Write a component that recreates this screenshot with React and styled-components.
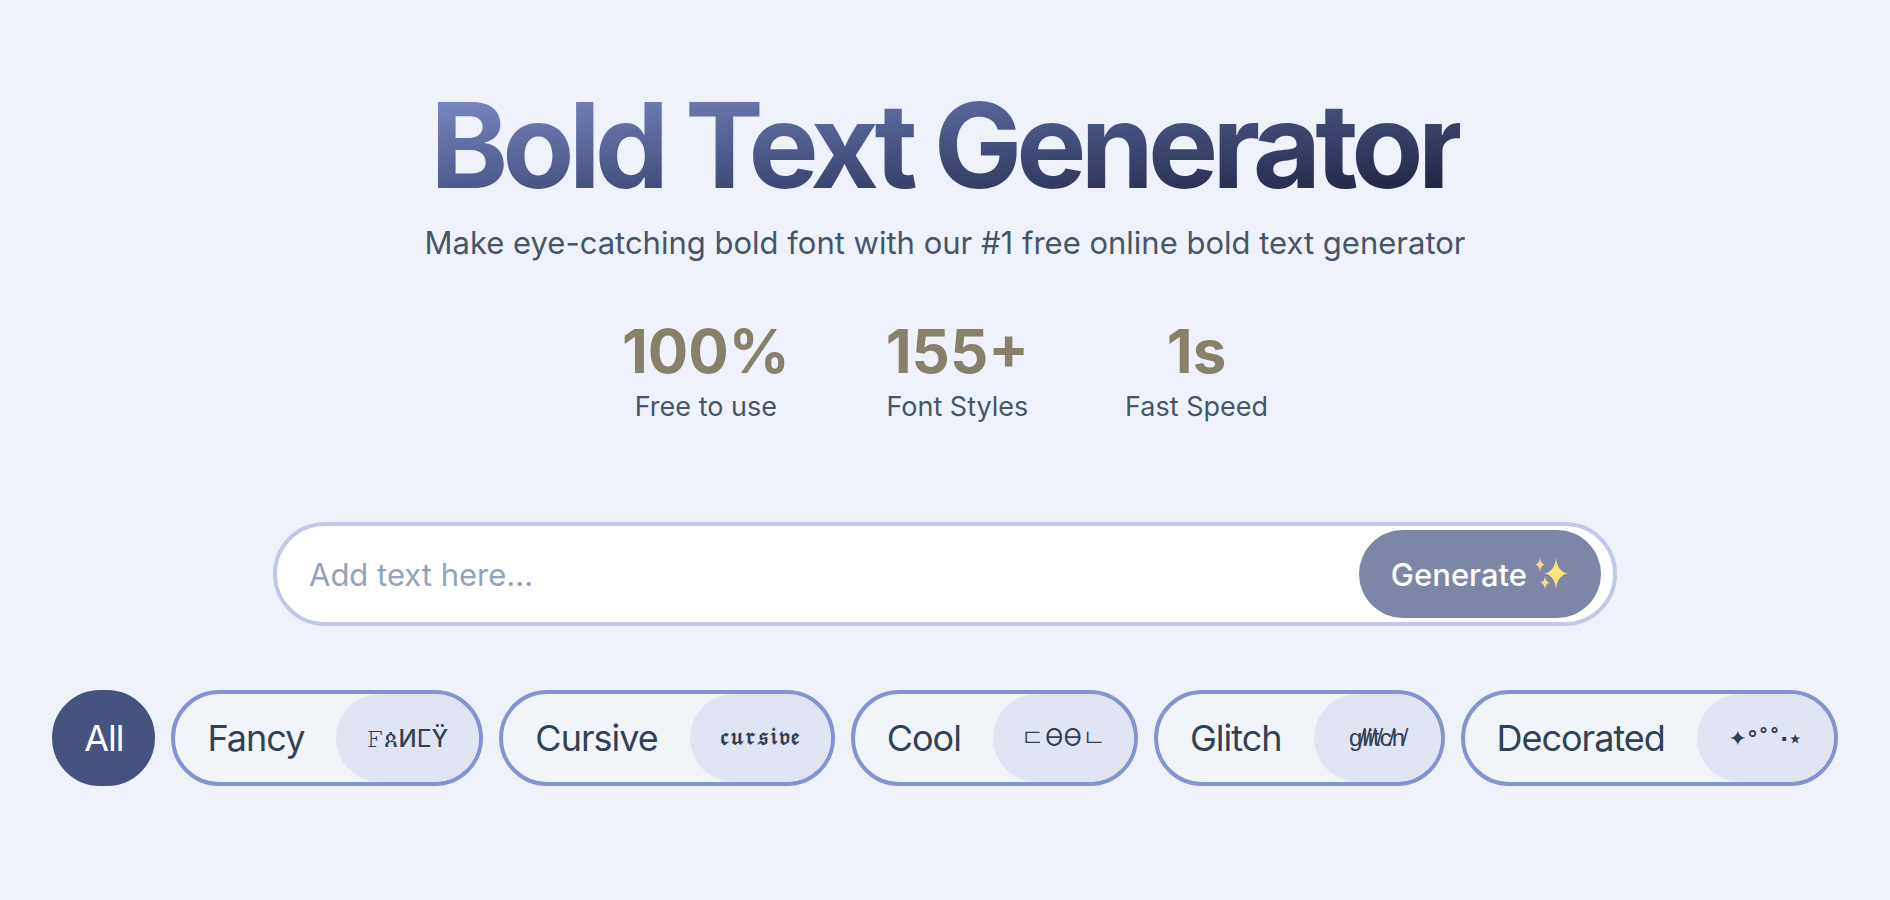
import React from 'react';
import styled, { createGlobalStyle } from 'styled-components';

const GlobalStyle = createGlobalStyle`
    * {
        box-sizing: border-box;
    }
    body {
        margin: 0;
        background-color: #eff2fb;
        font-family: Inter, "Liberation Sans", sans-serif;
        color: #475569;
    }
`
const Page = styled.main`
    width: 100%;
    display: flex;
    flex-direction: column;
    align-items: center;
    padding: 85px 24px;
`
const Title = styled.h1`
    margin: 0;
    font-size: 118px;
    font-weight: 700;
    line-height: 120px;
    letter-spacing: -6px;
    text-align: center;
    color: transparent;
    background-image: linear-gradient(to bottom right, #818fcb, #475282, #1a1d35);
    background-clip: text;
`
const Subtitle = styled.p`
    margin: 16px 0 0;
    font-size: 31px;
    line-height: 44px;
    text-align: center;
`
const Stats = styled.dl`
    display: flex;
    flex-wrap: wrap;
    justify-content: center;
    gap: 96px;
    margin: 56px 0 0;
`
const Stat = styled.div`
    display: flex;
    flex-direction: column-reverse;
    align-items: center;
`
const StatValue = styled.dd`
    margin: 0;
    font-size: 60px;
    font-weight: 700;
    line-height: 60px;
    color: #88806a;
`
const StatLabel = styled.dt`
    margin-top: 6px;
    font-size: 27px;
    line-height: 40px;
`
const TextForm = styled.form`
    width: 100%;
    max-width: 1344px;
    display: flex;
    align-items: center;
    margin-top: 95px;
    padding: 4px 12px 4px 0;
    border: 4px solid #c2c8e8;
    border-radius: 52px;
    background-color: #ffffff;
`
const TextInput = styled.input`
    flex: 1;
    min-width: 0;
    height: 88px;
    padding: 0 32px;
    border: none;
    outline: none;
    background: transparent;
    font-family: inherit;
    font-size: 31px;
    color: #334155;

    &::placeholder {
        color: #94a3b8;
        opacity: 1;
    }
`
const GenerateButton = styled.button`
    height: 88px;
    display: flex;
    align-items: center;
    gap: 8px;
    padding: 0 32px;
    border: none;
    border-radius: 44px;
    background-color: #7e86a7;
    color: #ffffff;
    font-family: inherit;
    font-size: 31px;
    font-weight: 500;
`
const Tabs = styled.nav`
    display: flex;
    flex-wrap: wrap;
    justify-content: center;
    gap: 16px;
    margin-top: 64px;
`
const Tab = styled.button`
    height: 96px;
    display: flex;
    align-items: center;
    padding: ${({ $active }) => ($active ? '0 28px' : '0')};
    border: 4px solid ${({ $active }) => ($active ? '#465380' : '#8594d0')};
    border-radius: 48px;
    overflow: hidden;
    background-color: ${({ $active }) => ($active ? '#465380' : '#f1f5f9')};
    color: ${({ $active }) => ($active ? '#ffffff' : '#334155')};
    font-family: inherit;
    font-size: 36px;
    letter-spacing: -1px;
`
const TabName = styled.span`
    padding: 0 32px;
`
const Sample = styled.span`
    width: ${({ $width }) => $width}px;
    height: 88px;
    display: flex;
    align-items: center;
    justify-content: center;
    border-radius: 44px;
    background-color: #e1e4f3;
    font-family: ${({ $font }) => $font || 'Inter'}, "DejaVu Sans", sans-serif;
    font-size: ${({ $size }) => $size || 24}px;
    font-weight: ${({ $weight }) => $weight || 400};
    letter-spacing: normal;
`

const stats = [
    { value: '100%', label: 'Free to use' },
    { value: '155+', label: 'Font Styles' },
    { value: '1s', label: 'Fast Speed' },
]

const categories = [
    { name: 'Fancy', sample: '𝙵ጰИⵎΫ', width: 143, weight: 500 },
    { name: 'Cursive', sample: '𝔠𝔲𝔯𝔰𝔦𝔳𝔢', width: 141, font: '"DejaVu Math TeX Gyre"', size: 20, weight: 700 },
    { name: 'Cool', sample: 'ㄷӨӨㄴ', width: 141 },
    { name: 'Glitch', sample: 'g̸l̸i̸t̸c̸h̸', width: 127, font: '"Liberation Sans"' },
    { name: 'Decorated', sample: '✦°˚˚·⋆', width: 137, font: '"DejaVu Sans"', size: 22, weight: 700 },
]

const Sparkles = () => (
    <svg width="34" height="34" viewBox="0 0 34 34" aria-hidden="true">
        <path fill="#fde37c" d="M21 1Q22.500 15 33 16.500Q22.500 18 21 32Q19.500 18 9 16.500Q19.500 15 21 1Z" />
        <path fill="#fbd98a" d="M5 0Q5.500 7 10 7.500Q5.500 8 5 15Q4.500 8 0 7.500Q4.500 7 5 0Z" />
        <path fill="#fbd98a" d="M10 19Q10.500 25 15 25.500Q10.500 26 10 33Q9.500 26 5 25.500Q9.500 25 10 19Z" />
    </svg>
)

const App = () => {

    return (
        <Page>
            <GlobalStyle />
            <Title>Bold Text Generator</Title>
            <Subtitle>Make eye-catching bold font with our #1 free online bold text generator</Subtitle>
            <Stats>
                {stats.map(({ value, label }) => (
                    <Stat key={label}>
                        <StatLabel>{label}</StatLabel>
                        <StatValue>{value}</StatValue>
                    </Stat>
                ))}
            </Stats>
            <TextForm onSubmit={(e) => e.preventDefault()}>
                <TextInput type='text' aria-label='Text' placeholder='Add text here...' />
                <GenerateButton type='submit'>Generate <Sparkles /></GenerateButton>
            </TextForm>
            <Tabs>
                <Tab type='button' $active>All</Tab>
                {categories.map(({ name, sample, width, font, size, weight }) => (
                    <Tab type='button' key={name}>
                        <TabName>{name}</TabName>
                        <Sample $width={width} $font={font} $size={size} $weight={weight}>{sample}</Sample>
                    </Tab>
                ))}
            </Tabs>
        </Page>
    )
}

export default App;
